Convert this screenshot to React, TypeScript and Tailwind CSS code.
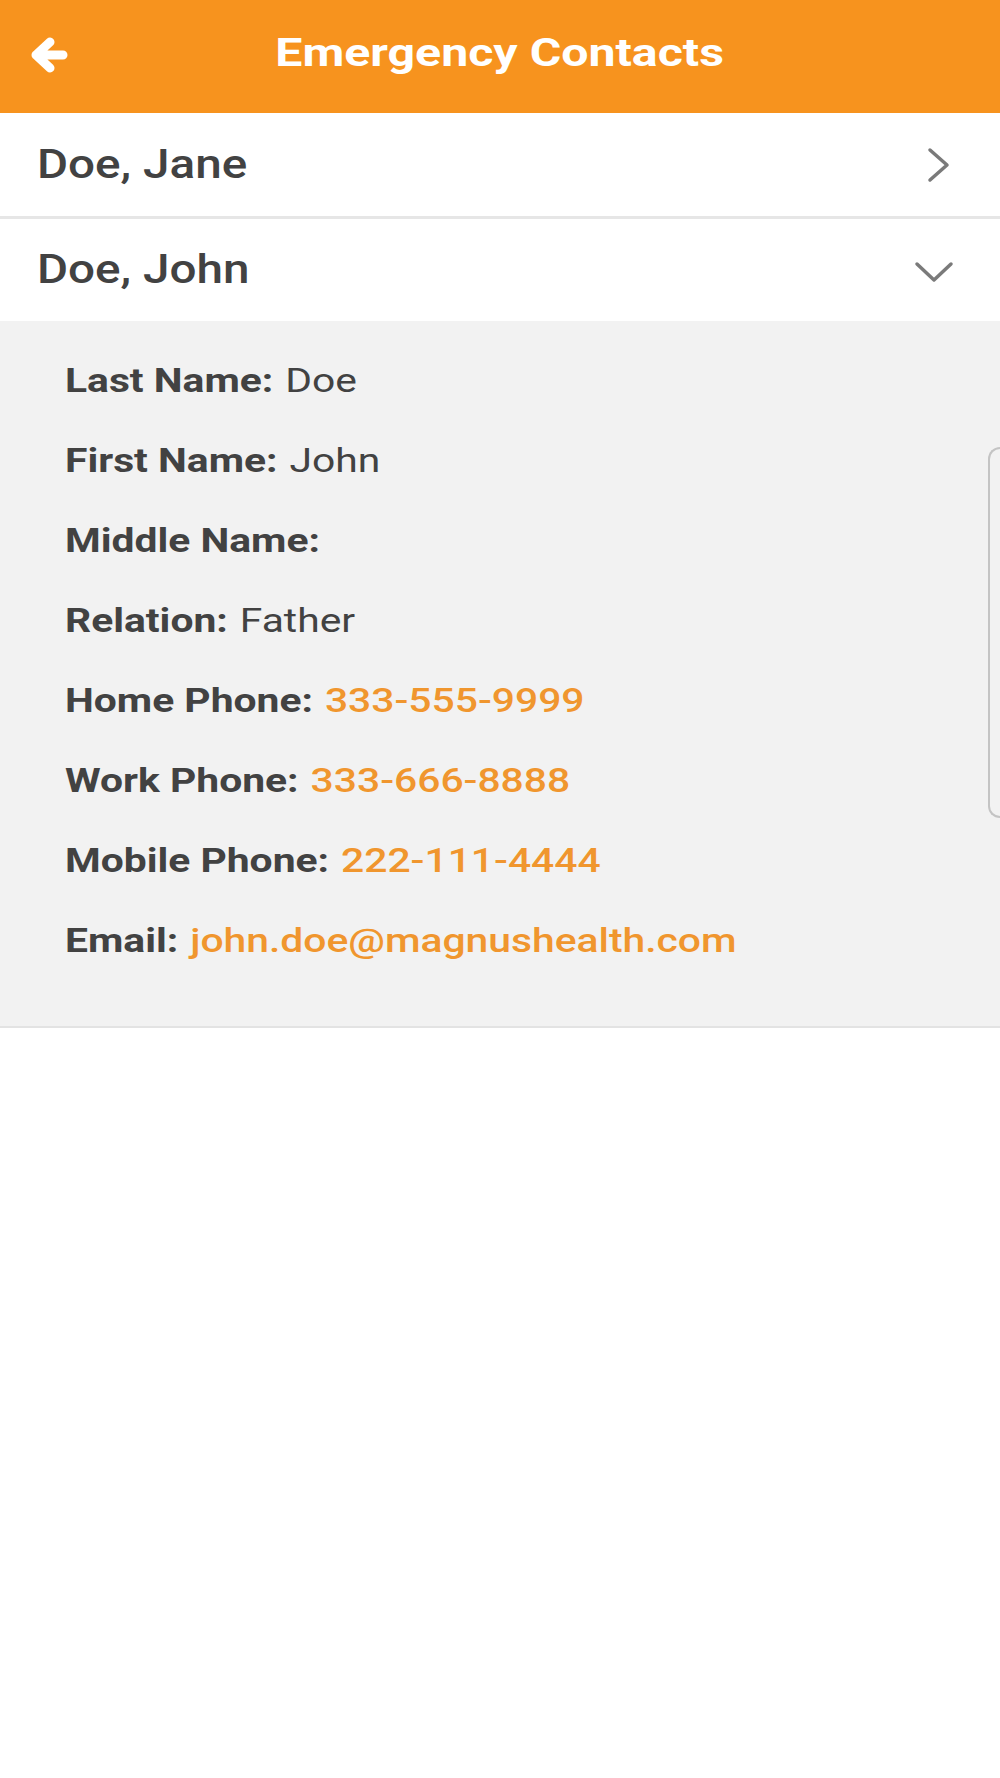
import React from 'react';

const details: { label: string; value: string; link?: boolean }[] = [
  { label: 'Last Name:', value: 'Doe' },
  { label: 'First Name:', value: 'John' },
  { label: 'Middle Name:', value: '' },
  { label: 'Relation:', value: 'Father' },
  { label: 'Home Phone:', value: '333-555-9999', link: true },
  { label: 'Work Phone:', value: '333-666-8888', link: true },
  { label: 'Mobile Phone:', value: '222-111-4444', link: true },
  { label: 'Email:', value: 'john.doe@magnushealth.com', link: true },
];

const BackArrow = () => (
  <svg width="38" height="36" viewBox="0 0 38 36" fill="none">
    <path d="M20 5L6 18L20 31M6 18H33" stroke="white" strokeWidth="9" strokeLinecap="round" strokeLinejoin="round" />
  </svg>
);

const ChevronRight = () => (
  <svg width="26" height="36" viewBox="0 0 26 36" fill="none">
    <path d="M4 3L21 18L4 33" stroke="#7a7a7a" strokeWidth="3.5" strokeLinecap="round" strokeLinejoin="round" />
  </svg>
);

const ChevronDown = () => (
  <svg width="40" height="24" viewBox="0 0 40 24" fill="none">
    <path d="M3 4L20 20L37 4" stroke="#7a7a7a" strokeWidth="3.5" strokeLinecap="round" strokeLinejoin="round" />
  </svg>
);

export default function App() {
  return (
    <div className="min-h-[1778px] bg-white font-['Roboto',sans-serif] relative overflow-hidden">
      {/* header */}
      <div className="h-[113px] bg-[#f7931e] relative flex items-center justify-center pb-[6px]">
        <button className="absolute left-[30px] top-[37px]" aria-label="Back">
          <BackArrow />
        </button>
        <h1 className="text-[38px] font-bold text-white scale-x-[1.27]">Emergency Contacts</h1>
      </div>

      {/* collapsed contact */}
      <div className="h-[106px] flex items-center justify-between pl-[37px] pr-[48px] border-b-[3px] border-[#e6e6e6]">
        <span className="text-[40px] font-medium text-[#424242] origin-left scale-x-[1.19]">Doe, Jane</span>
        <ChevronRight />
      </div>

      {/* expanded contact */}
      <div className="h-[102px] flex items-center justify-between pl-[37px] pr-[48px]">
        <span className="text-[40px] font-medium text-[#424242] origin-left scale-x-[1.19]">Doe, John</span>
        <div className="pt-[4px] -mr-[2px]">
          <ChevronDown />
        </div>
      </div>

      <div className="bg-[#f2f2f2] pt-[19px] pb-[46px] pl-[65px] border-b-2 border-[#e3e3e3]">
        {details.map((d) => (
          <div key={d.label} className="w-fit h-[80px] flex items-center text-[34px] text-[#424242] origin-left scale-x-[1.2]">
            <span className="font-bold">{d.label}</span>
            {d.value && (
              <span className={d.link ? 'ml-[10px] font-medium text-[#f0962e]' : 'ml-[10px]'}>{d.value}</span>
            )}
          </div>
        ))}
      </div>

      {/* scroll indicator */}
      <div className="absolute right-0 top-[447px] w-[12px] h-[371px] border-l-2 border-t-2 border-b-2 border-[#c4c4c4] rounded-l-[12px]" />
    </div>
  );
}
